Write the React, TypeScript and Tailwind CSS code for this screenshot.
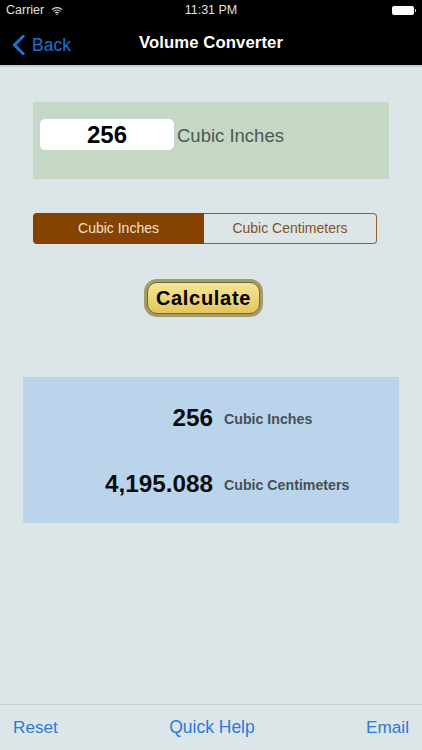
const WifiIcon = () => (
  <svg width="12" height="10" viewBox="0 0 14 11" fill="none" stroke="#ddd" strokeWidth="1.3">
    <path d="M1 4 A8.5 8.5 0 0 1 13 4" />
    <path d="M3 6 A5.5 5.5 0 0 1 11 6" />
    <path d="M5 8 A2.8 2.8 0 0 1 9 8" />
    <path d="M7 10.6 L5.8 9.2 A1.8 1.8 0 0 1 8.2 9.2 Z" fill="#ddd" stroke="none" />
  </svg>
);

const BackChevron = () => (
  <svg width="14" height="22" viewBox="0 0 14 22" fill="none" stroke="#1a72d6" strokeWidth="3">
    <path d="M12 1.5 L2.5 11 L12 20.5" />
  </svg>
);

export default function App() {
  return (
    <div className="w-[422px] h-[750px] flex flex-col overflow-hidden bg-[#dce6e8] font-['Liberation_Sans',sans-serif]">
      {/* status + nav bar */}
      <div className="h-[65px] shrink-0 bg-black flex flex-col">
        <div className="h-[21px] flex items-center justify-between pl-[6px] pr-[6px] text-[12.5px] text-[#e0e0e0]">
          <div className="w-[130px] flex items-center gap-[7px]">
            <span>Carrier</span>
            <WifiIcon />
          </div>
          <span>11:31 PM</span>
          <div className="w-[130px] flex justify-end items-center">
            <div className="w-[22px] h-[9px] bg-white rounded-[2px]" />
            <div className="w-[1px] h-[3px] bg-[#ccc] ml-[1px]" />
          </div>
        </div>
        <div className="flex-1 relative flex items-center justify-center">
          <div className="absolute left-[12px] top-[11px] flex items-center gap-[6px] text-[#1a72d6] text-[17.5px]">
            <BackChevron />
            <span>Back</span>
          </div>
          <span className="text-white font-bold text-[16.7px] tracking-[0.1px]">Volume Converter</span>
        </div>
      </div>
      <div className="h-[2px] shrink-0 bg-[#c3d0d0]" />

      {/* input panel */}
      <div className="mt-[35px] mx-[33px] h-[77px] bg-[#c5d8c5] pl-[7px] pt-[17px]">
        <div className="flex items-center gap-[3px]">
          <div className="w-[134px] h-[31px] bg-white rounded-[5px] flex items-center justify-center text-[24px] font-bold text-black">
            256
          </div>
          <span className="text-[18.5px] text-[#4d5654] pt-[3px]">Cubic Inches</span>
        </div>
      </div>

      {/* segmented control */}
      <div className="mt-[34px] mx-[33px] w-[344px] h-[31px] flex text-[14px]">
        <div className="w-[171px] bg-[#864200] rounded-l-[4px] flex items-center justify-center text-[#eee3d6]">
          Cubic Inches
        </div>
        <div className="flex-1 rounded-r-[4px] border border-l-0 border-[#91602f] flex items-center justify-center text-[#85501f]">
          Cubic Centimeters
        </div>
      </div>

      {/* calculate button */}
      <div className="mt-[35px] flex justify-center pr-[15px]">
        <div className="w-[119px] h-[38px] rounded-[13px] bg-[#a29c68] p-[3px]">
          <div className="h-full rounded-[10px] border border-[#6f6a3a] bg-gradient-to-b from-[#f6e596] to-[#e3c55a] flex items-center justify-center text-[20px] font-bold text-black tracking-[0.7px]">
            Calculate
          </div>
        </div>
      </div>

      {/* results panel */}
      <div className="mt-[60px] mx-[23px] w-[376px] h-[146px] bg-[#bad5eb] flex flex-col gap-[36px] pt-[26px]">
        <div className="flex items-center h-[30px]">
          <span className="w-[190px] text-right text-[24.3px] font-bold text-[#0c0c0c]">256</span>
          <span className="ml-[11px] pt-[3px] text-[14.2px] font-bold text-[#474f55]">Cubic Inches</span>
        </div>
        <div className="flex items-center h-[30px]">
          <span className="w-[190px] text-right text-[24.3px] font-bold text-[#0c0c0c]">4,195.088</span>
          <span className="ml-[11px] pt-[3px] text-[14.2px] font-bold text-[#474f55]">Cubic Centimeters</span>
        </div>
      </div>

      {/* toolbar */}
      <div className="mt-auto h-[46px] border-t border-[#c6d0d2] flex items-center justify-between px-[13px] text-[17.2px] text-[#2a7ad9]">
        <span>Reset</span>
        <span className="text-[17.5px]">Quick Help</span>
        <span>Email</span>
      </div>
    </div>
  );
}
